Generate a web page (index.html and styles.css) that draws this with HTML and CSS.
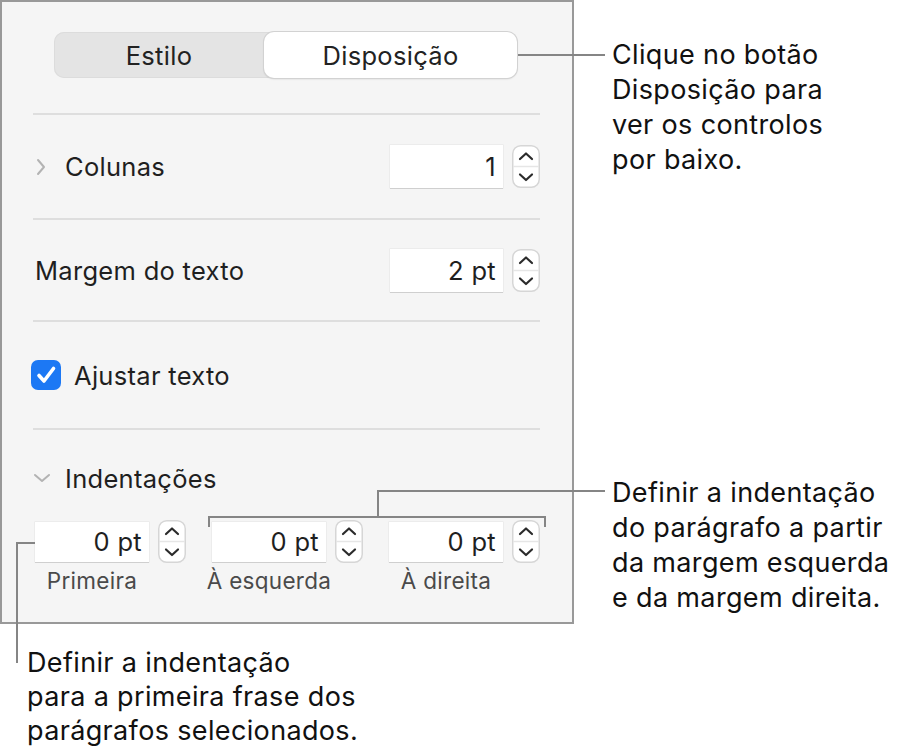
FILE: index.html
```html
<!DOCTYPE html>
<html lang="pt">
<head>
<meta charset="utf-8">
<title>Disposição</title>
<link rel="stylesheet" href="styles.css">
</head>
<body>
<div class="page">
  <div class="panel">
    <div class="seg">
      <div class="seg-item">Estilo</div>
      <div class="seg-item active">Disposição</div>
    </div>
    <div class="sep"></div>

    <div class="section s1">
      <div class="row">
        <div class="lead">
          <svg class="chev" width="14" height="18" viewBox="0 0 14 18"><path d="M4 2 L10 9 L4 16" fill="none" stroke="#b3b3b3" stroke-width="2" stroke-linecap="round" stroke-linejoin="round"/></svg>
          <span class="label">Colunas</span>
        </div>
        <div class="spin">
          <div class="field">1</div>
          <svg class="stepper" width="28" height="43" viewBox="0 0 28 43"><rect x="0.75" y="0.75" width="26.5" height="41.5" rx="8" fill="#fff" stroke="#d6d6d6" stroke-width="1.5"/><line x1="1" y1="21.5" x2="27" y2="21.5" stroke="#e6e6e6" stroke-width="1.5"/><path d="M8 14 L14 8.5 L20 14" fill="none" stroke="#2b2b2b" stroke-width="2.2" stroke-linecap="round" stroke-linejoin="round"/><path d="M8 29.5 L14 35 L20 29.5" fill="none" stroke="#2b2b2b" stroke-width="2.2" stroke-linecap="round" stroke-linejoin="round"/></svg>
        </div>
      </div>
    </div>
    <div class="sep"></div>

    <div class="section s2">
      <div class="row">
        <span class="label plain">Margem do texto</span>
        <div class="spin">
          <div class="field">2 pt</div>
          <svg class="stepper" width="28" height="43" viewBox="0 0 28 43"><rect x="0.75" y="0.75" width="26.5" height="41.5" rx="8" fill="#fff" stroke="#d6d6d6" stroke-width="1.5"/><line x1="1" y1="21.5" x2="27" y2="21.5" stroke="#e6e6e6" stroke-width="1.5"/><path d="M8 14 L14 8.5 L20 14" fill="none" stroke="#2b2b2b" stroke-width="2.2" stroke-linecap="round" stroke-linejoin="round"/><path d="M8 29.5 L14 35 L20 29.5" fill="none" stroke="#2b2b2b" stroke-width="2.2" stroke-linecap="round" stroke-linejoin="round"/></svg>
        </div>
      </div>
    </div>
    <div class="sep"></div>

    <div class="section s3">
      <div class="row">
        <div class="lead check-lead">
          <svg class="checkbox" width="30" height="30" viewBox="0 0 30 30"><rect x="0" y="0" width="30" height="30" rx="7" fill="#1c78f4"/><path d="M8 15.5 L13 21 L22.5 8.5" fill="none" stroke="#fff" stroke-width="3.6" stroke-linecap="round" stroke-linejoin="round"/></svg>
          <span class="label">Ajustar texto</span>
        </div>
      </div>
    </div>
    <div class="sep"></div>

    <div class="section s4">
      <div class="lead indent-head">
        <svg class="chev" width="18" height="14" viewBox="0 0 18 14"><path d="M2 4 L9 10 L16 4" fill="none" stroke="#b3b3b3" stroke-width="2" stroke-linecap="round" stroke-linejoin="round"/></svg>
        <span class="label">Indentações</span>
      </div>
      <div class="indents">
        <div class="indent">
          <div class="spin">
            <div class="field small">0 pt</div>
            <svg class="stepper" width="28" height="43" viewBox="0 0 28 43"><rect x="0.75" y="0.75" width="26.5" height="41.5" rx="8" fill="#fff" stroke="#d6d6d6" stroke-width="1.5"/><line x1="1" y1="21.5" x2="27" y2="21.5" stroke="#e6e6e6" stroke-width="1.5"/><path d="M8 14 L14 8.5 L20 14" fill="none" stroke="#2b2b2b" stroke-width="2.2" stroke-linecap="round" stroke-linejoin="round"/><path d="M8 29.5 L14 35 L20 29.5" fill="none" stroke="#2b2b2b" stroke-width="2.2" stroke-linecap="round" stroke-linejoin="round"/></svg>
          </div>
          <div class="sub"><span>Primeira</span></div>
        </div>
        <div class="indent">
          <div class="spin">
            <div class="field small">0 pt</div>
            <svg class="stepper" width="28" height="43" viewBox="0 0 28 43"><rect x="0.75" y="0.75" width="26.5" height="41.5" rx="8" fill="#fff" stroke="#d6d6d6" stroke-width="1.5"/><line x1="1" y1="21.5" x2="27" y2="21.5" stroke="#e6e6e6" stroke-width="1.5"/><path d="M8 14 L14 8.5 L20 14" fill="none" stroke="#2b2b2b" stroke-width="2.2" stroke-linecap="round" stroke-linejoin="round"/><path d="M8 29.5 L14 35 L20 29.5" fill="none" stroke="#2b2b2b" stroke-width="2.2" stroke-linecap="round" stroke-linejoin="round"/></svg>
          </div>
          <div class="sub"><span>À esquerda</span></div>
        </div>
        <div class="indent">
          <div class="spin">
            <div class="field small">0 pt</div>
            <svg class="stepper" width="28" height="43" viewBox="0 0 28 43"><rect x="0.75" y="0.75" width="26.5" height="41.5" rx="8" fill="#fff" stroke="#d6d6d6" stroke-width="1.5"/><line x1="1" y1="21.5" x2="27" y2="21.5" stroke="#e6e6e6" stroke-width="1.5"/><path d="M8 14 L14 8.5 L20 14" fill="none" stroke="#2b2b2b" stroke-width="2.2" stroke-linecap="round" stroke-linejoin="round"/><path d="M8 29.5 L14 35 L20 29.5" fill="none" stroke="#2b2b2b" stroke-width="2.2" stroke-linecap="round" stroke-linejoin="round"/></svg>
          </div>
          <div class="sub"><span>À direita</span></div>
        </div>
      </div>
    </div>
  </div>

  <div class="leader lead-top"></div>
  <div class="leader-box bracket-low"></div>
  <div class="leader-box bracket-up"></div>
  <div class="leader-box lead-left"></div>

  <p class="callout c-top">Clique no botão<br>Disposição para<br>ver os controlos<br>por baixo.</p>
  <p class="callout c-right">Definir a indentação<br>do parágrafo a partir<br>da margem esquerda<br>e da margem direita.</p>
  <p class="callout c-bottom">Definir a indentação<br>para a primeira frase dos<br>parágrafos selecionados.</p>
</div>
</body>
</html>
```

FILE: styles.css
```css
* { box-sizing: border-box; }
html, body { margin: 0; padding: 0; background: #fff; }
body {
  font-family: Inter, "Noto Sans", "Liberation Sans", sans-serif;
  color: #222;
}
.page {
  position: relative;
  width: 904px;
  height: 753px;
  overflow: hidden;
}

/* Panel */
.panel {
  width: 574px;
  height: 624px;
  background: #f5f5f5;
  border: 2px solid #999;
  display: flex;
  flex-direction: column;
}
.seg {
  margin: 30px 0 0 52px;
  width: 463px;
  height: 46px;
  background: #e4e4e4;
  border-radius: 10px;
  box-shadow: inset 0 0 0 1px #dcdcdc;
  display: flex;
  align-items: stretch;
}
.seg-item {
  flex: 0 0 210px;
  display: flex;
  align-items: center;
  justify-content: center;
  font-size: 25.5px;
  letter-spacing: 0.3px;
  color: #222;
}
.seg-item.active {
  flex: 1 1 auto;
  background: #fff;
  border-radius: 10px;
  box-shadow: 0 0 0 1px #d2d2d2, 0 1px 2px rgba(0,0,0,0.18);
}

.sep {
  margin: 35px 32px 0 31px;
  height: 2px;
  background: #dedede;
  flex: none;
}
.section { margin: 0 32px 0 31px; flex: none; }
.s1 ~ .sep { margin-top: 0; }
.s1 { height: 103px; display: flex; align-items: center; }
.s2 { height: 100px; display: flex; align-items: center; }
.s3 { height: 106px; display: flex; align-items: center; }
.row {
  width: 100%;
  display: flex;
  align-items: center;
  justify-content: space-between;
}
.lead { display: flex; align-items: center; }
.label { font-size: 25.5px; letter-spacing: 0.3px; color: #1f1f1f; }
.chev { display: block; }
.s1 .chev { margin: 0 17px 0 1px; }
.label.plain { margin-left: 2px; }
.check-lead { margin-left: -2px; }
.checkbox { display: block; margin-right: 13px; }

.spin { display: flex; align-items: center; gap: 9px; }
.field {
  width: 113px;
  height: 43px;
  background: #fff;
  box-shadow: 0 1px 0 #cfcfcf, 0 0 0 0.5px #e4e4e4;
  font-size: 25.5px;
  letter-spacing: 0.3px;
  color: #1f1f1f;
  display: flex;
  align-items: center;
  justify-content: flex-end;
  padding-right: 7px;
}
.field.small { width: 114px; height: 40px; }
.stepper { display: block; }

.indent-head { margin-top: 28px; height: 40px; }
.indent-head .chev { margin: 0 14px 0 0; }
.indents {
  margin: 22px 0 0 2px;
  display: flex;
  justify-content: space-between;
}
.indent { display: flex; flex-direction: column; }
.sub {
  width: 114px;
  display: flex;
  justify-content: center;
  white-space: nowrap;
  font-size: 22.5px;
  letter-spacing: 0.3px;
  color: #4a4a4a;
  line-height: 30px;
  margin-top: 3px;
}

/* Callout leaders */
.leader { position: absolute; background: #858585; }
.lead-top { left: 518px; top: 54px; width: 87px; height: 2px; }
.leader-box { position: absolute; border-color: #858585; border-style: solid; border-width: 0; }
.bracket-low { left: 208px; top: 516px; width: 338px; height: 11px; border-width: 2px 2px 0 2px; }
.bracket-up { left: 377px; top: 490px; width: 228px; height: 27px; border-width: 2px 0 0 2px; }
.lead-left { left: 16px; top: 542px; width: 19px; height: 121px; border-width: 2px 0 0 2px; }

/* Callout text */
.callout {
  position: absolute;
  margin: 0;
  font-size: 27px;
  letter-spacing: 0.35px;
  line-height: 35px;
  color: #111;
}
.c-top { left: 612px; top: 37px; }
.c-right { left: 612px; top: 475px; }
.c-bottom { left: 27px; top: 646px; line-height: 34px; }
```
